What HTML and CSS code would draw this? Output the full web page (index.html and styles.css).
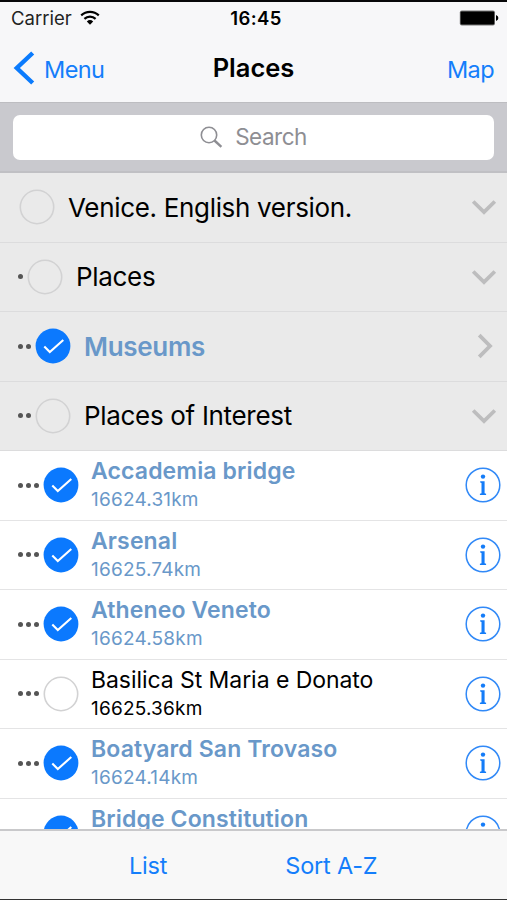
FILE: index.html
```html
<!DOCTYPE html>
<html lang="en">
<head>
<meta charset="utf-8">
<title>Places</title>
<link rel="stylesheet" href="styles.css">
</head>
<body>
<svg class="defs" aria-hidden="true">
  <symbol id="on" viewBox="0 0 36 36"><circle cx="18" cy="18" r="17.4" fill="#0b79fe"/><path d="M9.3 18.5l5.5 5.6L28.3 12" fill="none" stroke="#fff" stroke-width="2.1"/></symbol>
  <symbol id="off" viewBox="0 0 36 36"><circle cx="18" cy="18" r="16.7" fill="none" stroke="#d2d2d3" stroke-width="1.6"/></symbol>
  <symbol id="down" viewBox="0 0 26 26"><path d="M2.2 7.5L13 18 23.8 7.5" fill="none" stroke="#bdbdbe" stroke-width="3.8"/></symbol>
  <symbol id="right" viewBox="0 0 26 26"><path d="M8.2 2.2L19 13 8.2 23.8" fill="none" stroke="#bdbdbe" stroke-width="3.8"/></symbol>
  <symbol id="info" viewBox="0 0 36 36"><circle cx="18" cy="18" r="16.8" fill="none" stroke="#3189f7" stroke-width="1.5"/><circle cx="18" cy="9.6" r="2.2" fill="#147cf8"/><path d="M15.2 14.3h4.4v12l1.5.5v1.1h-6.2v-1.1l1.6-.5V15.9l-1.3-.4z" fill="#147cf8"/></symbol>
</svg>
<div class="phone">
  <header>
    <div class="status">
      <div class="carrier"><span>Carrier</span><svg width="20" height="16" viewBox="0 0 20 16"><path d="M1.2 5.4a12.8 12.8 0 0 1 17.6 0M4.4 8.9a8.2 8.2 0 0 1 11.2 0" fill="none" stroke="#000" stroke-width="2.2"/><path d="M6.8 11.4a4.8 4.8 0 0 1 6.4 0L10 14.8z"/></svg></div>
      <div class="time">16:45</div>
      <svg class="battery" width="40" height="16" viewBox="0 0 40 16"><rect x=".8" y=".6" width="35.2" height="14.8" rx="2" fill="#777"/><rect x="1.6" y="1.4" width="33.6" height="13.2" rx="1"/><path d="M37 5q2.4 1 2.4 3T37 11z"/></svg>
    </div>
    <nav>
      <a class="back"><svg width="22" height="34" viewBox="0 0 22 34"><path d="M19.7 2L3.8 17l15.9 15" fill="none" stroke="#0b7bfd" stroke-width="4.4"/></svg><span class="menu">Menu</span></a>
      <h1>Places</h1>
      <a class="map">Map</a>
    </nav>
  </header>
  <div class="search"><div class="field"><svg width="23" height="23" viewBox="0 0 23 23"><path d="M14.5 14.5l6.9 6.4" stroke="#8e8e93" stroke-width="2.4"/><circle cx="9" cy="9" r="7.7" fill="none" stroke="#8e8e93" stroke-width="1.6"/></svg><span>Search</span></div></div>
  <main>
    <section class="row group"><span class="dots"></span><svg class="check"><use href="#off"/></svg><span class="title">Venice. English version.</span><svg class="chev"><use href="#down"/></svg></section>
    <section class="row group"><span class="dots"><i></i></span><svg class="check"><use href="#off"/></svg><span class="title">Places</span><svg class="chev"><use href="#down"/></svg></section>
    <section class="row group picked"><span class="dots"><i></i><i></i></span><svg class="check"><use href="#on"/></svg><span class="title">Museums</span><svg class="chev"><use href="#right"/></svg></section>
    <section class="row group"><span class="dots"><i></i><i></i></span><svg class="check"><use href="#off"/></svg><span class="title">Places of Interest</span><svg class="chev"><use href="#down"/></svg></section>
    <section class="row picked"><span class="dots"><i></i><i></i><i></i></span><svg class="check"><use href="#on"/></svg><div class="place"><b>Accademia bridge</b><small>16624.31km</small></div><svg class="info"><use href="#info"/></svg></section>
    <section class="row picked"><span class="dots"><i></i><i></i><i></i></span><svg class="check"><use href="#on"/></svg><div class="place"><b>Arsenal</b><small>16625.74km</small></div><svg class="info"><use href="#info"/></svg></section>
    <section class="row picked"><span class="dots"><i></i><i></i><i></i></span><svg class="check"><use href="#on"/></svg><div class="place"><b>Atheneo Veneto</b><small>16624.58km</small></div><svg class="info"><use href="#info"/></svg></section>
    <section class="row"><span class="dots"><i></i><i></i><i></i></span><svg class="check"><use href="#off"/></svg><div class="place"><b>Basilica St Maria e Donato</b><small>16625.36km</small></div><svg class="info"><use href="#info"/></svg></section>
    <section class="row picked"><span class="dots"><i></i><i></i><i></i></span><svg class="check"><use href="#on"/></svg><div class="place"><b>Boatyard San Trovaso</b><small>16624.14km</small></div><svg class="info"><use href="#info"/></svg></section>
    <section class="row picked"><span class="dots"></span><svg class="check last"><use href="#on"/></svg><div class="place"><b>Bridge Constitution</b></div><svg class="info"><use href="#info"/></svg></section>
  </main>
  <footer><a class="list">List</a><a class="sort">Sort A-Z</a></footer>
</div>
</body>
</html>
```

FILE: styles.css
```css
* { box-sizing: border-box; }
body { margin: 0; background: #fff; font-family: Inter, "Liberation Sans", sans-serif; color: #000; }
.defs { position: absolute; width: 0; height: 0; }
.phone { width: 507px; height: 900px; display: flex; flex-direction: column; overflow: hidden; border-top: 2px solid #08080a; border-bottom: 1px solid #333; }
svg { display: block; flex: none; }
a { color: #147efb; font-size: 23.5px; letter-spacing: -.6px; }

header { height: 100px; background: #f7f7f9; flex: none; }
.status { height: 32px; display: grid; grid-template-columns: 1fr auto 1fr; align-items: center; padding: 0 8px 0 11px; font-size: 18.5px; }
.carrier { display: flex; align-items: center; gap: 8px; color: #222; }
.time { font-weight: 600; letter-spacing: .4px; margin-left: 2px; }
.battery { justify-self: end; }
nav { height: 68px; display: grid; grid-template-columns: 1fr auto 1fr; align-items: center; padding: 0 13px; }
.back { display: flex; align-items: center; gap: 9px; }
.menu, .map { padding-top: 3px; }
h1 { margin: 0; font-size: 25.5px; font-weight: 600; letter-spacing: 0; padding-bottom: 1px; }
.map { justify-self: end; }

.search { height: 71px; flex: none; background: #c9c9ce; border-top: 1px solid #bdbdc1; border-bottom: 2px solid #c0c0c4; padding: 12px 13px 0; }
.field { height: 45px; background: #fff; border-radius: 7px; display: flex; justify-content: center; align-items: center; gap: 12px; color: #8e8e93; font-size: 22.5px; letter-spacing: -.5px; }
.field span { padding-bottom: 2px; }

main { flex: 1; overflow: hidden; min-height: 0; }
.row { height: 69.5px; display: flex; align-items: center; padding: 0 6px 0 18px; border-bottom: 1px solid #e4e4e5; }
.group { background: #eaeaea; border-color: #dcdcdd; padding-right: 10px; }
.dots { display: flex; gap: 3px; padding-right: 4px; }
.dots:empty { padding-right: 1px; }
.dots i { width: 5px; height: 5px; border-radius: 50%; background: #555; }
.check { width: 36px; height: 36px; }
.check.last { margin-left: 24px; }
.title { font-size: 26px; margin-left: 13px; flex: 1; white-space: nowrap; letter-spacing: -.32px; }
.place { margin-left: 12px; flex: 1; display: flex; flex-direction: column; white-space: nowrap; height: 100%; padding-top: 6px; }
.place b { font-size: 23px; line-height: 29px; font-weight: 400; letter-spacing: -.06px; }
.place small { font-size: 19px; line-height: 27px; letter-spacing: .2px; }
.picked { color: #6998c9; }
.picked b { font-weight: 600; letter-spacing: .13px; }
.picked .title { font-weight: 600; letter-spacing: -.3px; }
.chev { width: 26px; height: 26px; }
.info { width: 36px; height: 36px; }

footer { height: 70px; flex: none; background: #f8f8f8; border-top: 2px solid #c9c9cb; display: flex; align-items: center; padding: 0 0 0 129px; gap: 118px; }
footer a { letter-spacing: -.2px; }
```
